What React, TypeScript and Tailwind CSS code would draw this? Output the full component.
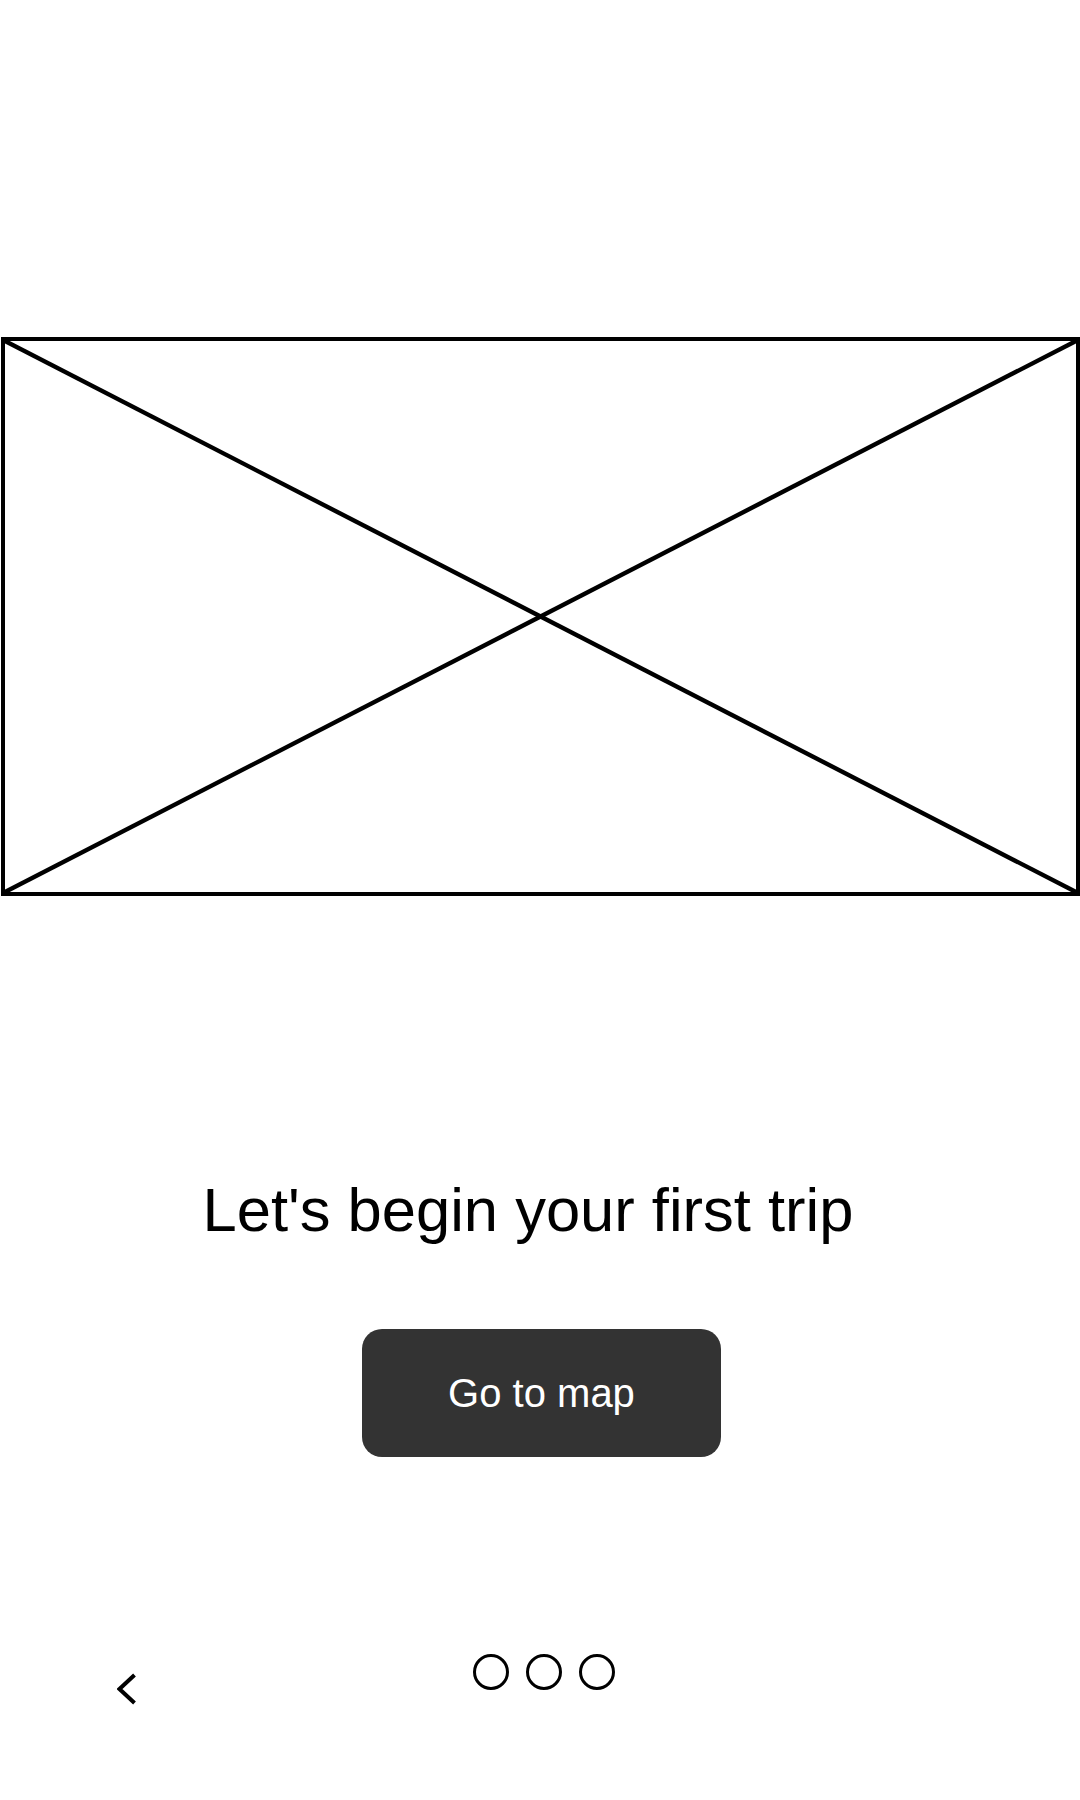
const dots = [0, 1, 2];

export default function App() {
  return (
    <div className="flex min-h-[1800px] w-[1080px] flex-col bg-white font-['Liberation_Sans',Arial,sans-serif] text-black">
      {/* image placeholder */}
      <div className="ml-px mt-[337px] h-[559px] w-[1079px] border-[4.5px] border-black">
        <svg className="block h-full w-full" viewBox="0 0 100 100" preserveAspectRatio="none">
          <line x1="0" y1="0" x2="100" y2="100" stroke="black" strokeWidth="4.4" vectorEffect="non-scaling-stroke" />
          <line x1="100" y1="0" x2="0" y2="100" stroke="black" strokeWidth="4.4" vectorEffect="non-scaling-stroke" />
        </svg>
      </div>

      <h1 className="mt-[283px] flex justify-center pr-[24px] text-[61.5px] font-normal leading-[61px]">
        Let's begin your first trip
      </h1>

      <div className="mt-[89px] flex justify-center pl-[3px]">
        <button
          type="button"
          className="flex h-[128px] w-[359px] items-center justify-center rounded-[20px] bg-[#333333] text-[40px] leading-[40px] text-white"
        >
          Go to map
        </button>
      </div>

      <nav className="mt-[197px] grid grid-cols-[1fr_auto_1fr]">
        <div className="pl-[117px] pt-[19px]">
          <svg width="20" height="32" viewBox="0 0 20 32" fill="none" aria-label="Back">
            <path d="M17.5 2 L2.5 16 L17.5 30" stroke="black" strokeWidth="4" />
          </svg>
        </div>
        <div className="flex gap-[17px] pl-[7px]">
          {dots.map((dot) => (
            <span key={dot} className="block h-[36px] w-[36px] rounded-full border-[3.5px] border-black" />
          ))}
        </div>
        <div />
      </nav>
    </div>
  );
}
